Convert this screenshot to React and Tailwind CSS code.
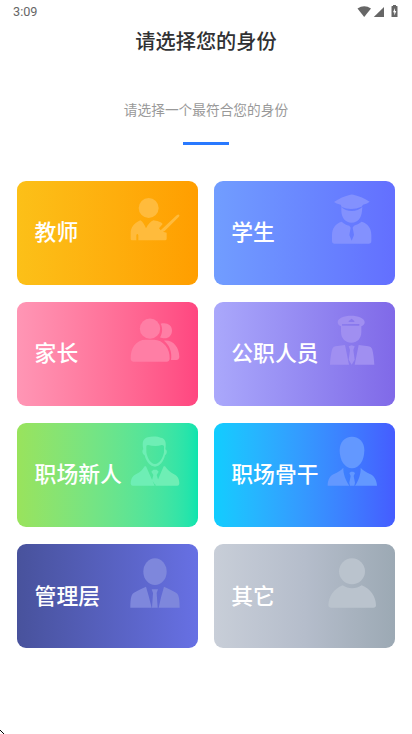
import React from "react";

const roles = [
  {
    label: "教师",
    bg: "bg-linear-to-r from-[#fcc018] to-[#ff9e00]",
    tint: "text-[#ffbb3c]",
    box: "355 55 162 162",
    art: (
      <>
        <circle cx="417" cy="109" r="30" />
        <path d="M363 202v-17c0-17 9-30 29-39 7 4 13 14 17 24 5-10 13-20 22-24 10 1 24 5 28 11l-11 13 5 6 49-46q5-3 7 0 1 3-2 6l-42 42-5 2 11 3v18q0 5-5 5h-80v-15q-1-4-3-4t-3 4v15h-13q-4 0-4-4Z" />
      </>
    ),
  },
  {
    label: "学生",
    bg: "bg-linear-to-r from-[#719dff] to-[#636fff]",
    tint: "text-[#8391fe]",
    box: "357 55 162 162",
    art: (
      <>
        <path d="M384 91q23-16 49-22 5-1 9 0 27 6 49 21-6 6-20 9l-4 6q-31 13-60 1l-3-7q-14-3-20-8Z" />
        <path d="M406 106q12 12 31 12t32-12l-1 12c-2 21-12 35-31 35s-30-14-31-35Z" />
        <path d="M378 208v-18c0-20 10-34 29-40 8 7 15 10 23 12l4 6-4 22 7 17 7-17-4-22 4-6q12-3 23-12c19 6 29 20 29 40v18q0 8-8 8H386q-8 0-8-8Z" />
      </>
    ),
  },
  {
    label: "家长",
    bg: "bg-linear-to-r from-[#ff96b5] to-[#ff4680]",
    tint: "text-[#ff7ea5]",
    box: "355 52 162 162",
    art: (
      <>
        <circle cx="421" cy="105" r="30.5" />
        <path d="M453 90c3-1 6-1 10-1 14 0 24 9 24 22s-10 23-22 23c-6 0-10-1-14-3 7-11 9-28 2-41Z" />
        <path d="M363 196c-1-34 17-58 45-58h25c27 0 49 27 47 57q-1 9-9 9H371q-7 0-8-8ZM463 141c28-3 46 21 46 49q-1 9-9 9h-16c4-25-5-45-21-58Z" />
      </>
    ),
  },
  {
    label: "公职人员",
    bg: "bg-linear-to-r from-[#aaa8fb] to-[#8069e8]",
    tint: "text-[#a08ff1]",
    box: "357 52 162 162",
    art: (
      <>
        <path fillRule="evenodd" d="M395 85c0-11 19-19 40-19s41 8 41 19c0 6-3 10-10 13v16c0 21-13 33-30 33s-31-12-31-33V98c-7-3-10-7-10-13Zm33-3v3h17v-3l-8-7ZM408 91v5h52v-5Z" />
        <path d="M372 213c1-22 4-39 7-48q3-6 9-7l29-4 12 59ZM446 213l12-59 29 4q9 1 11 7c3 9 6 26 7 48ZM428 158l9-3 9 3-4 11 4 29-9 15-9-15 4-29Z" />
      </>
    ),
  },
  {
    label: "职场新人",
    bg: "bg-linear-to-r from-[#99e35c] to-[#0be4ae]",
    tint: "text-[#6eeeb5]",
    box: "355 49 162 162",
    art: (
      <>
        <path fillRule="evenodd" d="M401 101c-4-22-1-32 13-36 12-4 31-3 39 1 13 1 18 13 14 35 7 3 5 15-1 18-4 18-16 34-30 34s-27-16-31-34c-7-3-9-14-4-18Zm9-11v19c2 15 12 36 26 36s25-21 27-36V91q-3-3-7-3c-12 4-28 3-41 0q-3 0-5 2Z" />
        <path d="M363 204c1-16 6-23 17-29 12-5 19-13 25-23h4l26 58h-66q-5 0-6-6ZM462 152h4c8 11 15 18 26 23s17 13 17 29q-1 6-6 6h-66ZM425 168l6-6h10l6 6-6 10 5 16-9 14-10-14 4-16Z" />
      </>
    ),
  },
  {
    label: "职场骨干",
    bg: "bg-linear-to-r from-[#10cdff] to-[#455cff]",
    tint: "text-[#6398ff]",
    box: "357 49 162 162",
    art: (
      <>
        <path d="M401 104c0-25 15-41 37-41s37 16 37 41c0 32-16 54-37 54s-37-22-37-54Z" />
        <path d="M365 210c0-17 6-29 19-35 11-5 21-11 28-19-1 17 7 38 18 54ZM447 210c11-16 18-37 17-54 7 8 17 14 28 19 13 6 20 18 21 35ZM430 172l5-4h7l5 4-4 9 4 20-2 9h-13l-2-9 4-20Z" />
      </>
    ),
  },
  {
    label: "管理层",
    bg: "bg-linear-to-r from-[#48529c] to-[#6770e4]",
    tint: "text-[#7e87dc]",
    box: "355 49 162 162",
    art: (
      <>
        <ellipse cx="436" cy="102" rx="35" ry="40" />
        <path d="M362 210c0-22 2-36 7-42q4-5 40-21 9 29 17 63ZM447 210q7-34 16-63 36 16 40 21c5 6 7 20 7 42ZM426 155h19l-4 11 3 44h-17l3-44Z" />
      </>
    ),
  },
  {
    label: "其它",
    bg: "bg-linear-to-r from-[#c8ced8] via-[#b5bdcb] to-[#9ca9b4]",
    tint: "text-[#bac3cd]",
    box: "357 49 162 162",
    art: (
      <>
        <circle cx="438" cy="101" r="39" />
        <path d="M367 203c1-27 16-49 43-60 17 12 40 12 57 0 26 10 43 34 43 60q0 7-8 7H374q-7 0-7-7Z" />
      </>
    ),
  },
];

function RoleCard({ label, bg, tint, box, art }) {
  return (
    <button className={`flex items-center justify-between rounded-[9px] pr-[15.6px] pl-[17.3px] text-left ${bg}`}>
      <span className="-mt-[3.4px] w-[92px] text-[21.8px] leading-8 font-medium whitespace-nowrap text-white">{label}</span>
      <svg viewBox={box} fill="currentColor" className={`mt-[9.3px] size-[54px] shrink-0 self-start ${tint}`}>
        {art}
      </svg>
    </button>
  );
}

function StatusBar() {
  return (
    <div className="flex h-6 items-center justify-between px-[13px] text-[#666]">
      <span className="font-[Roboto,sans-serif] text-[12.7px] leading-4">3:09</span>
      <svg width="42" height="14" viewBox="0 0 42 14" fill="currentColor" className="-mt-px">
        <path d="M0.500 3.500Q7.200-1 14 3.500L7.200 12Z" />
        <path d="M16.800 12 27 2v10Z" />
        <path fillRule="evenodd" d="M36 0h3v1h1q.5 0 .5.5V12H34.500V1.500q0-.5.5-.5H36Zm2 3-2 4.300h1.300V10.500L39.300 6H38Z" />
      </svg>
    </div>
  );
}

export default function App() {
  return (
    <main className="flex h-[734px] w-[412px] flex-col overflow-hidden bg-white font-['Noto_Sans_CJK_SC',sans-serif]">
      <StatusBar />
      <h1 className="mt-px h-8 text-center text-[20.2px] leading-8 font-medium text-[#303133]">请选择您的身份</h1>
      <p className="mt-[42px] h-5 text-center text-[13.7px] leading-5 font-normal text-[#999]">请选择一个最符合您的身份</p>
      <div className="mt-[23px] ml-[183px] h-[3px] w-[46px] bg-[#2979ff]" />
      <section className="mt-9 grid auto-rows-[104px] grid-cols-2 gap-x-4 gap-y-[17.1px] px-[17.3px]">
        {roles.map((role) => (
          <RoleCard key={role.label} {...role} />
        ))}
      </section>
      <svg width="4" height="4" viewBox="0 0 4 4" className="mt-auto shrink-0" shapeRendering="crispEdges">
        <path d="M0 0h1v1h1v1h1v1h1v1H3V3H2V2H1V1H0Z" />
      </svg>
    </main>
  );
}
